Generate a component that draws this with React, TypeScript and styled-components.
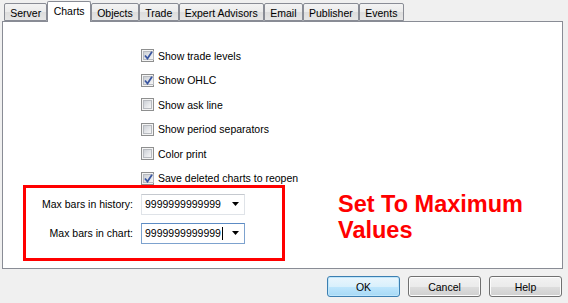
import React from "react";
import styled, { createGlobalStyle } from "styled-components";

const GlobalStyle = createGlobalStyle`
  html, body { margin: 0; padding: 0; background: #f0f0f0; }
  body { font-family: "Liberation Sans", Arial, sans-serif; }
`;

const Dialog = styled.div`
  width: 568px;
  height: 303px;
  background: #f0f0f0;
  display: flex;
  flex-direction: column;
  padding: 0 5px 0 2px;
  box-sizing: border-box;
  font-family: "Liberation Sans", Arial, sans-serif;
  font-size: 10.5px;
  color: #000;
`;

const TabBar = styled.div`
  height: 21px;
  display: flex;
  align-items: flex-end;
  padding-left: 2px;
`;

const Tab = styled.div<{ $active?: boolean }>`
  box-sizing: border-box;
  height: ${(p) => (p.$active ? 21 : 18)}px;
  margin-bottom: ${(p) => (p.$active ? -1 : 0)}px;
  position: relative;
  z-index: ${(p) => (p.$active ? 2 : 1)};
  padding: ${(p) => (p.$active ? "0 5.25px 2px" : "1px 5.25px 0")};
  border: 1px solid #898c95;
  border-bottom: ${(p) => (p.$active ? "none" : "1px solid #898c95")};
  border-radius: 2px 2px 0 0;
  background: ${(p) =>
    p.$active ? "#ffffff" : "linear-gradient(#f3f3f3 0%, #ebebeb 50%, #dddddd 51%, #e6e6e6 100%)"};
  display: flex;
  align-items: center;
  white-space: nowrap;
  font-size: 10.5px;
`;

const Panel = styled.div`
  box-sizing: border-box;
  height: 248px;
  border: 1px solid #898c95;
  background: #ffffff;
  padding: 27px 0 0 20px;
  display: flex;
  flex-direction: column;
`;

const CheckList = styled.div`
  margin-left: 118px;
  display: flex;
  flex-direction: column;
  gap: 11.6px;
`;

const CheckRow = styled.label`
  height: 13px;
  display: flex;
  align-items: center;
  gap: 4px;
  font-size: 10.5px;
  white-space: nowrap;
`;

const Box = styled.span`
  box-sizing: border-box;
  width: 13px;
  height: 13px;
  border: 1px solid #8e8f8f;
  background: #f4f4f4;
  padding: 1px;
  display: flex;
`;

const BoxInner = styled.span`
  flex: 1;
  background: linear-gradient(135deg, #cbcfd5 0%, #e4e6e9 55%, #f6f6f6 100%);
  border: 1px solid #b7babf;
  display: flex;
  align-items: center;
  justify-content: center;
`;

const BottomRow = styled.div`
  display: flex;
  align-items: flex-start;
`;

const RedBox = styled.div`
  box-sizing: border-box;
  width: 262px;
  height: 76px;
  border: 3px solid #ff0000;
  padding-top: 6px;
  display: grid;
  grid-template-columns: 107px 104px;
  column-gap: 8px;
  row-gap: 8px;
  align-content: start;
`;

const FieldLabel = styled.span`
  text-align: right;
  align-self: center;
  font-size: 10.5px;
  white-space: nowrap;
`;

const Combo = styled.div<{ $focused?: boolean }>`
  box-sizing: border-box;
  height: 21px;
  border: 1px solid ${(p) => (p.$focused ? "#7da2ce" : "#dfe3e8")};
  border-top-color: ${(p) => (p.$focused ? "#5c8bc4" : "#c5c9cf")};
  background: #fff;
  display: flex;
  align-items: center;
  padding-left: 3px;
  font-size: 10.5px;
`;

const ComboText = styled.span`
  flex: 1;
  display: flex;
  align-items: center;
`;

const Caret = styled.span`
  display: inline-block;
  width: 1px;
  height: 13px;
  background: #000;
  margin-left: 1px;
`;

const Arrow = styled.span`
  width: 16px;
  display: flex;
  justify-content: center;
  align-items: center;
  margin-right: 1px;
`;

const Callout = styled.div`
  margin: 6px 0 0 53px;
  color: #ff0000;
  font-weight: bold;
  font-size: 23.5px;
  line-height: 26px;
`;

const ButtonRow = styled.div`
  margin-top: 7px;
  display: flex;
  justify-content: flex-end;
  gap: 8px;
  padding-right: 1px;
`;

const Button = styled.button<{ $default?: boolean }>`
  box-sizing: border-box;
  width: 73px;
  height: 21px;
  border-radius: 3px;
  border: 1px solid ${(p) => (p.$default ? "#3c7fb1" : "#707070")};
  background: ${(p) =>
    p.$default
      ? "linear-gradient(#eaf6fd 0%, #d9f0fc 50%, #bee6fd 51%, #a7d9f5 100%)"
      : "linear-gradient(#f2f2f2 0%, #ebebeb 50%, #dddddd 51%, #cfcfcf 100%)"};
  box-shadow: inset 0 0 0 1px ${(p) => (p.$default ? "#bfe6fb" : "#fcfcfc")};
  font-family: "Liberation Sans", Arial, sans-serif;
  font-size: 10.5px;
  color: #000;
  padding: 0;
`;

const Check = () => (
  <svg width="9" height="9" viewBox="0 0 9 9">
    <path d="M1 4.5 L3.5 7.5 L8 0.8" fill="none" stroke="#3a56a0" strokeWidth="1.8" />
  </svg>
);

const Checkbox = ({ checked, label }: { checked: boolean; label: string }) => (
  <CheckRow>
    <Box>
      <BoxInner>{checked && <Check />}</BoxInner>
    </Box>
    {label}
  </CheckRow>
);

const DownArrow = () => (
  <svg width="7" height="4" viewBox="0 0 7 4">
    <path d="M0 0 H7 L3.5 4 Z" fill="#000" />
  </svg>
);

const tabs = ["Server", "Charts", "Objects", "Trade", "Expert Advisors", "Email", "Publisher", "Events"];

const options = [
  { label: "Show trade levels", checked: true },
  { label: "Show OHLC", checked: true },
  { label: "Show ask line", checked: false },
  { label: "Show period separators", checked: false },
  { label: "Color print", checked: false },
  { label: "Save deleted charts to reopen", checked: true },
];

export default function App() {
  return (
    <>
      <GlobalStyle />
      <Dialog>
        <TabBar>
          {tabs.map((t) => (
            <Tab key={t} $active={t === "Charts"}>
              {t}
            </Tab>
          ))}
        </TabBar>
        <Panel>
          <CheckList>
            {options.map((o) => (
              <Checkbox key={o.label} label={o.label} checked={o.checked} />
            ))}
          </CheckList>
          <BottomRow>
            <RedBox>
              <FieldLabel>Max bars in history:</FieldLabel>
              <Combo>
                <ComboText>9999999999999</ComboText>
                <Arrow>
                  <DownArrow />
                </Arrow>
              </Combo>
              <FieldLabel>Max bars in chart:</FieldLabel>
              <Combo $focused>
                <ComboText>
                  9999999999999
                  <Caret />
                </ComboText>
                <Arrow>
                  <DownArrow />
                </Arrow>
              </Combo>
            </RedBox>
            <Callout>
              Set To Maximum
              <br />
              Values
            </Callout>
          </BottomRow>
        </Panel>
        <ButtonRow>
          <Button $default>OK</Button>
          <Button>Cancel</Button>
          <Button>Help</Button>
        </ButtonRow>
      </Dialog>
    </>
  );
}
